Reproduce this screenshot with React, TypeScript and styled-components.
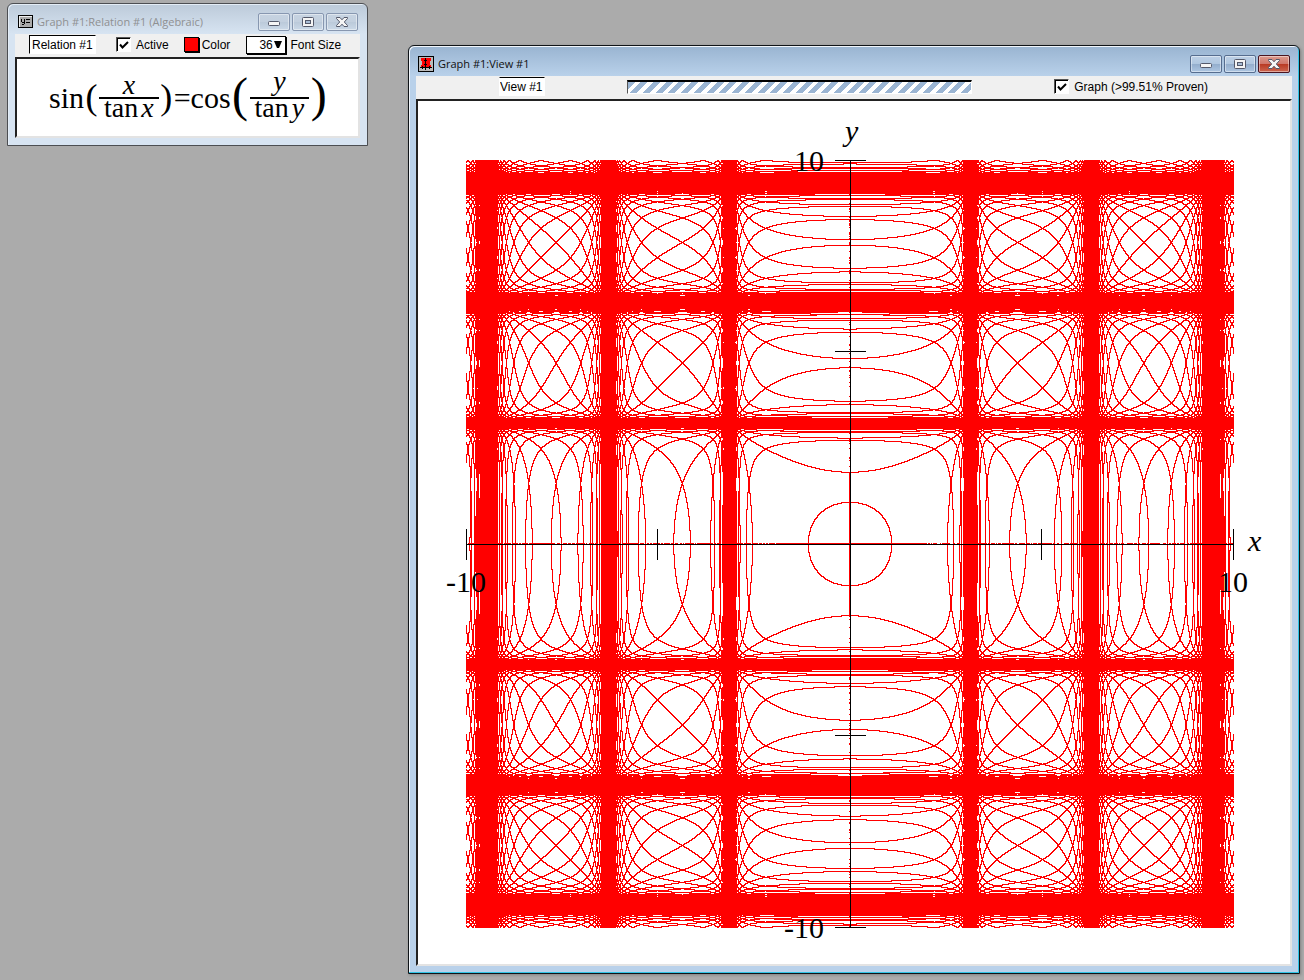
import React from 'react';
import styled, { createGlobalStyle, css } from 'styled-components';

const GlobalStyle = createGlobalStyle`
  *, *::before, *::after { box-sizing: border-box; }
  body { margin: 0; background: #ababab; }
`;

const UI_FONT = '"Liberation Sans", Arial, sans-serif';
const TITLE_FONT = '"Open Sans", "Noto Sans", sans-serif';
const MATH_FONT = '"Liberation Serif", "Times New Roman", serif';

/* ---------- plot of sin(x / tan x) = cos(y / tan y) ---------- */

const CELLS = 768;
const RANGE = 10;
const STEP = (2 * RANGE) / CELLS;

const ratio = (v: number) => (Math.abs(v) < 1e-9 ? 1 : v / Math.tan(v));

type Span = { lo: number; hi: number; pole: boolean };

/* v / tan v is monotone between its poles, so the end points bound each cell. */
const spans: Span[] = Array.from({ length: CELLS }, (_, i) => {
  const a = -RANGE + i * STEP;
  const b = a + STEP;
  const turnA = Math.floor(a / Math.PI);
  const turnB = Math.floor(b / Math.PI);
  const pole = turnA !== turnB && !(a <= 0 && b >= 0) && Math.abs(b) > 1e-9;
  const fa = ratio(a);
  const fb = ratio(b);
  return { lo: Math.min(fa, fb), hi: Math.max(fa, fb), pole };
});

const hitsRoot = (lo: number, hi: number) => {
  const k = Math.ceil((lo - Math.PI / 2) / (2 * Math.PI));
  return Math.PI / 2 + 2 * Math.PI * k <= hi;
};

const undecided = (distance: number, index: number, share: number) => {
  if (distance < 1.86) return true;
  const noise = Math.sin(index * 12.9898) * 43758.5453;
  return noise - Math.floor(noise) < share;
};

const isSolution = (col: number, row: number) => {
  const h = spans[col];
  const v = spans[CELLS - 1 - row];
  if (h.pole || v.pole) return true;
  if (row === CELLS / 2 - 1 && undecided(Math.abs(col * STEP - RANGE), col, 0.75)) return true;
  if (col === CELLS / 2 - 1 && undecided(Math.abs(row * STEP - RANGE), row, 0.3)) return true;
  return hitsRoot(h.lo + v.lo, h.hi + v.hi) || hitsRoot(h.lo - v.hi, h.hi - v.lo);
};

const buildPlot = () => {
  const parts: string[] = [];
  for (let row = 0; row < CELLS; row += 1) {
    let start = -1;
    for (let col = 0; col <= CELLS; col += 1) {
      const on = col < CELLS && isSolution(col, row);
      if (on && start < 0) start = col;
      if (!on && start >= 0) {
        parts.push(`M${start} ${row}h${col - start}v1h${start - col}z`);
        start = -1;
      }
    }
  }
  return parts.join('');
};

const plotPath = buildPlot();

/* ---------- windows ---------- */

const Desktop = styled.main`
  display: flex;
  align-items: flex-start;
  gap: 40px;
  min-height: 100vh;
  padding: 3px 4px 6px 7px;
  background: #ababab;
  font: 12px/16px ${UI_FONT};
  color: #000;
`;

const Window = styled.section<{ $active?: boolean }>`
  border: 1px solid ${p => (p.$active ? '#101418' : '#4c4e52')};
  border-radius: 6px 6px 0 0;
  padding: 0 7px 7px;
  ${p =>
    p.$active
      ? css`
          flex: 1;
          min-width: 0;
          margin-top: 42px;
          background: linear-gradient(#99b4d1, #b9d1ea 30px);
          box-shadow: inset -1px -1px #2fc4e6, inset 1px 1px #f2f7fc, 1px 1px 3px #00000040;
        `
      : css`
          flex: 0 0 361px;
          background: linear-gradient(#bccad9, #d7e4f2 30px);
          box-shadow: inset 1px 1px #e4edf6;
        `}
`;

const TitleBar = styled.header`
  display: flex;
  align-items: center;
  gap: 4px;
  height: 30px;
  padding: 6px 2px 0 2px;
`;

const Title = styled.h1<{ $active?: boolean }>`
  flex: 1;
  margin: 0;
  font: 400 11px/16px ${TITLE_FONT};
  white-space: nowrap;
  color: ${p => (p.$active ? '#101010' : '#8f9092')};
`;

const Controls = styled.div`
  display: flex;
  gap: 2px;
`;

const ControlButton = styled.button<{ $active?: boolean; $close?: boolean }>`
  display: grid;
  place-items: center;
  width: 32px;
  height: 18px;
  padding: 0;
  border: 1px solid ${p => (p.$active ? (p.$close ? '#4a1420' : '#566d8f') : '#8797b0')};
  border-radius: 2px;
  box-shadow: inset 0 0 0 1px #ffffff70;
  background: ${p =>
    p.$active
      ? p.$close
        ? 'linear-gradient(#dc9a8e, #d0766a 48%, #b93a24 52%, #cc6650)'
        : 'linear-gradient(#bdd0e6, #b0c7e0 48%, #94aecd 52%, #adc6e2)'
      : 'linear-gradient(#c6d3e1, #c3d0df 48%, #bbcada 52%, #cbd9e8)'};
`;

const Toolbar = styled.div<{ $spread?: boolean }>`
  display: flex;
  align-items: center;
  height: 23px;
  background: #f0f0f0;
  ${p =>
    p.$spread
      ? css`
          justify-content: space-between;
          padding: 0 84px 2px 83px;
        `
      : css`
          padding: 0 0 2px 14px;
        `}
`;

const NameField = styled.input<{ $width: number }>`
  width: ${p => p.$width}px;
  height: 19px;
  padding: 0;
  border: 1px solid #fff;
  border-top-color: #000;
  border-left-color: ${p => (p.$width > 50 ? '#000' : '#fff')};
  border-radius: 0;
  background: #fff;
  color: #000;
  font: inherit;
  text-indent: ${p => (p.$width > 50 ? 2 : 0)}px;
  outline: none;
`;

const CheckLabel = styled.label`
  display: flex;
  align-items: center;
  gap: 5px;
  white-space: nowrap;
`;

const CheckBox = styled.input`
  appearance: none;
  width: 15px;
  height: 15px;
  margin: 0;
  border: 1px solid;
  border-color: #555 #fff #fff #555;
  box-shadow: inset 1px 1px #000;
  background: #fff url("data:image/svg+xml,%3Csvg xmlns='http://www.w3.org/2000/svg' viewBox='0 0 13 13'%3E%3Cpath d='M3 6.5L5.5 9.5L11 4' fill='none' stroke='black' stroke-width='2'/%3E%3C/svg%3E");
`;

const ActiveLabel = styled(CheckLabel)`
  margin: 0 15px 0 20px;
`;

const ColorLabel = styled.label`
  display: flex;
  align-items: center;
  gap: 2px;
  margin-right: 16px;
`;

const Swatch = styled.button`
  width: 15px;
  height: 15px;
  margin-right: 1px;
  padding: 0;
  border: 1px solid #000;
  background: #f00;
  box-shadow: 1px 1px #000;
`;

const SizeLabel = styled.label`
  display: flex;
  align-items: center;
  gap: 4px;
  white-space: nowrap;
`;

const SizeSelect = styled.select`
  appearance: none;
  width: 40px;
  height: 18px;
  padding: 0 0 0 12px;
  border: 1px solid #000;
  border-radius: 0;
  box-shadow: 1px 1px #000;
  color: #000;
  background: #fff url("data:image/svg+xml,%3Csvg xmlns='http://www.w3.org/2000/svg' width='8' height='8'%3E%3Cpath d='M0 0H8L5 7H3Z'/%3E%3C/svg%3E") no-repeat right 3px center;
  font: inherit;
`;

const Progress = styled.div`
  flex: 0 1 345px;
  height: 14px;
  border: 1px solid;
  border-color: #000 #fff #fff #555;
  border-top-width: 2px;
  background: repeating-linear-gradient(135deg, #9bb5d3 0 5px, #fff 5px 9px);
`;

const Pane = styled.div`
  border: 2px solid;
  border-color: #222 #e3e3e3 #e3e3e3 #222;
  background: #fff;
`;

const FormulaPane = styled(Pane)`
  display: flex;
  align-items: center;
  height: 81px;
  padding-left: 32px;
`;

const PlotPane = styled(Pane)`
  svg { display: block; width: 100%; height: auto; }
`;

/* ---------- formula ---------- */

const Formula = styled.div`
  display: flex;
  align-items: center;
  font: 30px/30px ${MATH_FONT};
`;

const Paren = styled.span<{ $big?: boolean }>`
  width: ${p => (p.$big ? 19 : 15)}px;
  padding-bottom: ${p => (p.$big ? 6 : 2)}px;
  font-size: ${p => (p.$big ? 48 : 36)}px;
  text-align: center;
`;

const Fraction = styled.span`
  display: grid;
  grid-template-rows: 1fr 2px 1fr;
  font-size: 28px;
  line-height: 18px;
  text-align: center;
`;

const Numerator = styled.span<{ $lift: number }>`
  padding-bottom: ${p => p.$lift}px;
  font-style: italic;
`;

const Bar = styled.span`
  background: #000;
`;

const Denominator = styled.span`
  padding: 0 5px;
  i { margin-left: 3px; }
`;

const AxisText = styled.text<{ $italic?: boolean }>`
  font: ${p => (p.$italic ? 'italic ' : '')}30px ${MATH_FONT};
`;

/* ---------- icons ---------- */

const RelationIcon = () => (
  <svg width="16" height="14" viewBox="-1 0 16 14" shapeRendering="crispEdges">
    <path d="M0 0h15v13H0z" fill="#000" />
    <path d="M1 1h13v11H1z" fill="#aaa" />
    <path d="M1 1h13v1H2v10H1z" fill="#eee" />
    <path
      d="M3 4h1v3H3zM4 7h2v1H4zM6 4h1v5H6zM4 9h2v1H4zM8 4h4v1H8zM8 7h4v1H8z"
      fill="#000"
    />
  </svg>
);

const GraphIcon = () => (
  <svg width="16" height="16" viewBox="0 0 16 16" shapeRendering="crispEdges">
    <path d="M0 0h16v16H0z" fill="#000" />
    <path d="M1 1h14v14H1z" fill="#bbb" />
    <path d="M3 2h10v3h-1v4h1v2H3V9h1V5H3z" fill="#f00" />
    <path
      d="M7 2h1v12H7zM2 11h12v1H2zM4 10h1v3H4zM11 10h1v3h-1zM6 4h3v1H6zM6 8h3v1H6z"
      fill="#000"
    />
  </svg>
);

const WindowControls = ({ active }: { active?: boolean }) => (
  <Controls>
    <ControlButton $active={active} aria-label="Minimize">
      <svg width="12" height="8" viewBox="0 0 12 8">
        <rect x="0.5" y="3.5" width="11" height="4" rx="1" fill="#f5f5f5" stroke="#54596a" />
      </svg>
    </ControlButton>
    <ControlButton $active={active} aria-label="Maximize">
      <svg width="12" height="10" viewBox="0 0 12 10">
        <rect x="0.5" y="0.5" width="11" height="9" rx="1" fill="#f5f5f5" stroke="#54596a" />
        <rect x="3.5" y="3.5" width="5" height="3" fill="#a9bdd6" stroke="#54596a" />
      </svg>
    </ControlButton>
    <ControlButton $active={active} $close aria-label="Close">
      <svg width="12" height="10" viewBox="0 0 12 10">
        <path
          d="M0.5 0.5H4L6 2.8L8 0.5H11.5V1.5L8.3 5L11.5 8.5V9.5H8L6 7.2L4 9.5H0.5V8.5L3.7 5L0.5 1.5Z"
          fill="#f5f5f5"
          stroke="#54596a"
        />
      </svg>
    </ControlButton>
  </Controls>
);

const Plot = () => (
  <svg viewBox="0 0 872 863" role="img" aria-label="Graph of the relation">
    <g transform="translate(48 59)" shapeRendering="crispEdges">
      <path d={plotPath} fill="#f00" />
      <path
        d="M0 384h768v1H0zM384 0h1v768h-1zM0 369h1v31H0zM191 369h1v31h-1zM575 369h1v31h-1zM767 369h1v31h-1zM369 0h31v1h-31zM369 191h31v1h-31zM369 575h31v1h-31zM369 767h31v1h-31z"
        fill="#000"
      />
    </g>
    <AxisText $italic x="427" y="40">y</AxisText>
    <AxisText $italic x="830" y="450">x</AxisText>
    <AxisText x="406" y="70" textAnchor="end">10</AxisText>
    <AxisText x="406" y="837" textAnchor="end">-10</AxisText>
    <AxisText x="28" y="491">-10</AxisText>
    <AxisText x="800" y="491">10</AxisText>
  </svg>
);

export default function App() {
  return (
    <>
      <GlobalStyle />
      <Desktop>
        <Window>
          <TitleBar>
            <RelationIcon />
            <Title>Graph #1:Relation #1 (Algebraic)</Title>
            <WindowControls />
          </TitleBar>
          <Toolbar>
            <NameField $width={67} aria-label="Relation name" defaultValue="Relation #1" />
            <ActiveLabel>
              <CheckBox type="checkbox" defaultChecked />
              Active
            </ActiveLabel>
            <ColorLabel>
              <Swatch type="button" />
              Color
            </ColorLabel>
            <SizeLabel>
              <SizeSelect defaultValue="36">
                <option>36</option>
              </SizeSelect>
              Font Size
            </SizeLabel>
          </Toolbar>
          <FormulaPane>
            <Formula>
              <span>sin</span>
              <Paren>(</Paren>
              <Fraction>
                <Numerator $lift={3}>x</Numerator>
                <Bar />
                <Denominator>tan<i>x</i></Denominator>
              </Fraction>
              <Paren>)</Paren>
              <span>=cos</span>
              <Paren $big>(</Paren>
              <Fraction>
                <Numerator $lift={7}>y</Numerator>
                <Bar />
                <Denominator>tan<i>y</i></Denominator>
              </Fraction>
              <Paren $big>)</Paren>
            </Formula>
          </FormulaPane>
        </Window>
        <Window $active>
          <TitleBar>
            <GraphIcon />
            <Title $active>Graph #1:View #1</Title>
            <WindowControls active />
          </TitleBar>
          <Toolbar $spread>
            <NameField $width={46} aria-label="View name" defaultValue="View #1" />
            <Progress role="progressbar" aria-label="Graphing progress" />
            <CheckLabel>
              <CheckBox type="checkbox" defaultChecked />
              Graph (&gt;99.51% Proven)
            </CheckLabel>
          </Toolbar>
          <PlotPane>
            <Plot />
          </PlotPane>
        </Window>
      </Desktop>
    </>
  );
}
